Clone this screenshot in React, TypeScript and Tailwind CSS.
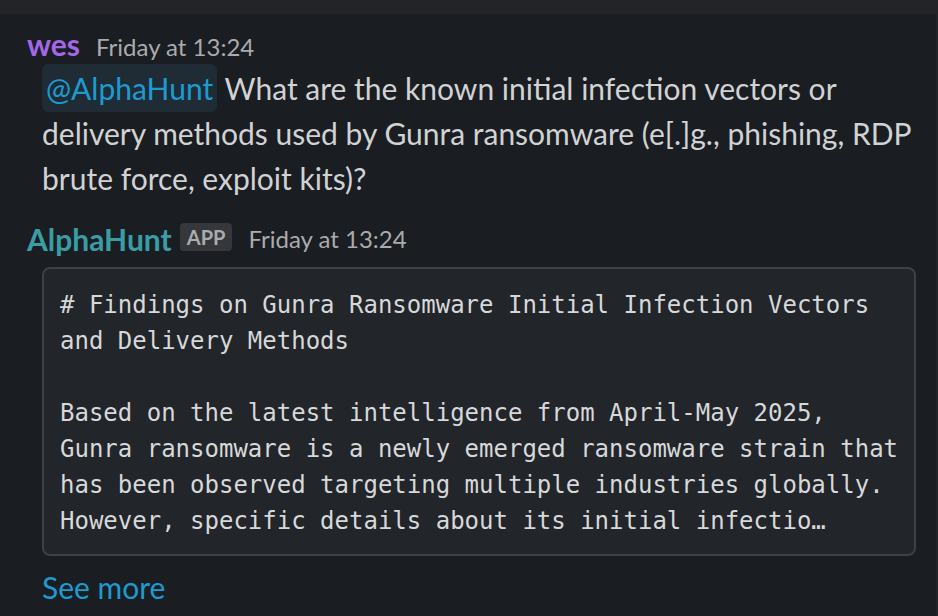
export default function App() {
  const codeLines = [
    '# Findings on Gunra Ransomware Initial Infection Vectors',
    'and Delivery Methods',
    '',
    'Based on the latest intelligence from April-May 2025,',
    'Gunra ransomware is a newly emerged ransomware strain that',
    'has been observed targeting multiple industries globally.',
    'However, specific details about its initial infectio\u2026',
  ];

  return (
    <div
      className="w-[938px] h-[616px] overflow-hidden bg-[#1a1d21] text-[#d1d2d3] flex flex-col"
      style={{ fontFamily: 'Lato, "Noto Sans", sans-serif' }}
    >
      <div className="h-[14px] shrink-0 bg-[#222428]" />

      <div className="flex-1 flex">
        <div className="flex-1 pl-[27px] pt-[12px]">
          {/* first message */}
          <div className="flex items-baseline gap-[16px] h-[36px]">
            <span className="text-[30px] font-bold text-[#a567e8] leading-[36px]">wes</span>
            <span className="text-[24px] text-[#ababad] leading-[36px]">Friday at 13:24</span>
          </div>
          <p className="pl-[15px] pr-[20px] mt-[4px] text-[30px] leading-[45px]">
            <span className="bg-[#1f2b35] text-[#1d9bd1] rounded-[6px] px-[4px] py-[6px]">@AlphaHunt</span>{' '}
            What are the known initial infection vectors or delivery methods used by Gunra ransomware (e[.]g., phishing, RDP brute force, exploit kits)?
          </p>

          {/* second message */}
          <div className="flex items-center gap-[16px] mt-[18px] h-[40px]">
            <div className="flex items-center gap-[8px]">
              <span className="text-[30px] font-bold text-[#3a9da6] leading-[36px]">AlphaHunt</span>
              <span className="text-[20px] font-bold text-[#ababad] bg-[#35373b] rounded-[4px] px-[7px] leading-[28px] -mt-[4px]">APP</span>
            </div>
            <span className="text-[24px] text-[#ababad] leading-[36px]">Friday at 13:24</span>
          </div>

          <div className="ml-[15px] mr-[20px] mt-[8px] border-2 border-[#3e4044] bg-[#222529] rounded-[8px] px-[16px] pt-[18px] pb-[15px]">
            {codeLines.map((line, i) => (
              <div
                key={i}
                className="text-[24px] leading-[36px] h-[36px] whitespace-pre text-[#d7d8d9]"
                style={{ fontFamily: '"DejaVu Sans Mono", "Liberation Mono", monospace' }}
              >
                {line}
              </div>
            ))}
          </div>

          <div className="pl-[15px] mt-[11px] text-[30px] leading-[40px] text-[#1d9bd1]">See more</div>
        </div>
        <div className="w-[3px] shrink-0 bg-[#222428]" />
      </div>
    </div>
  );
}
